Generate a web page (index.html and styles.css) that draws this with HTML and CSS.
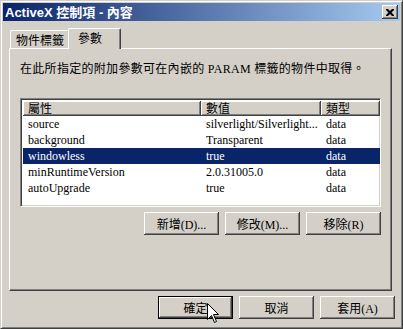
FILE: index.html
```html
<!DOCTYPE html>
<html lang="zh-Hant">
<head>
    <meta charset="UTF-8">
    <meta name="viewport" content="width=device-width, initial-scale=1.0">
    <title>ActiveX 控制項 - 內容</title>
    <link rel="stylesheet" href="styles.css">
</head>
<body>

<div class="window">
    <div class="titlebar">
        <span class="title">ActiveX 控制項 - 內容</span>
        <span class="close">
            <svg width="8" height="7" viewBox="0 0 8 7">
                <path d="M0 0h2l2 2 2-2h2v1l-2.5 2.5L8 6v1H6L4 5 2 7H0V6l2.5-2.5L0 1z" fill="#000"/>
            </svg>
        </span>
    </div>

    <div class="tabs">
        <div class="tab">物件標籤</div>
        <div class="tab active">參數</div>
    </div>

    <div class="panel">
        <p class="hint">在此所指定的附加參數可在內嵌的 PARAM 標籤的物件中取得。</p>

        <div class="list">
            <div class="list-head">
                <div class="head c1">屬性</div>
                <div class="head c2">數值</div>
                <div class="head c3">類型</div>
            </div>
            <div class="row">
                <span class="c1">source</span>
                <span class="c2">silverlight/Silverlight...</span>
                <span class="c3">data</span>
            </div>
            <div class="row">
                <span class="c1">background</span>
                <span class="c2">Transparent</span>
                <span class="c3">data</span>
            </div>
            <div class="row selected">
                <span class="c1">windowless</span>
                <span class="c2">true</span>
                <span class="c3">data</span>
            </div>
            <div class="row">
                <span class="c1">minRuntimeVersion</span>
                <span class="c2">2.0.31005.0</span>
                <span class="c3">data</span>
            </div>
            <div class="row">
                <span class="c1">autoUpgrade</span>
                <span class="c2">true</span>
                <span class="c3">data</span>
            </div>
        </div>

        <div class="actions">
            <button class="btn">新增(D)...</button>
            <button class="btn">修改(M)...</button>
            <button class="btn">移除(R)</button>
        </div>
    </div>

    <div class="footer">
        <button class="btn default">確定</button>
        <button class="btn">取消</button>
        <button class="btn">套用(A)</button>
    </div>

    <!-- 滑鼠游標 -->
    <svg class="cursor" width="13" height="21" viewBox="0 0 13 21">
        <path d="M0.5 0.5V16.5L4.5 12.5L7.5 19.5L9.5 18.5L6.5 11.5H11.5Z" fill="#fff" stroke="#000" stroke-linejoin="miter"/>
    </svg>
</div>

</body>
</html>
```

FILE: styles.css
```css
* {
    box-sizing: border-box;
}
body {
    margin: 0;
    background-color: #d4d0c8;
    font-family: "Liberation Serif", "Noto Sans CJK TC", serif;
    font-size: 12px;
    color: #000;
}
.window {
    position: relative;
    width: 403px;
    height: 329px;
    padding: 2px;
    border: 1px solid;
    border-color: #d4d0c8 #404040 #404040 #d4d0c8;
    box-shadow: inset 1px 1px #fff, inset -1px -1px #808080;
    display: flex;
    flex-direction: column;
}
.titlebar {
    height: 18px;
    padding: 0 2px 0 2px;
    display: flex;
    align-items: center;
    justify-content: space-between;
    background: linear-gradient(to right, #0a246a, #a6caf0);
}
.title {
    color: #fff;
    font-family: "Liberation Sans", "Noto Sans CJK TC", sans-serif;
    font-weight: bold;
    font-size: 13px;
    line-height: 15px;
}
.close {
    width: 16px;
    height: 14px;
    display: flex;
    align-items: center;
    justify-content: center;
    background: #d4d0c8;
    box-shadow: inset -1px -1px #404040, inset 1px 1px #fff, inset -2px -2px #808080;
}
.tabs {
    display: flex;
    align-items: flex-end;
    height: 20px;
    margin-top: 7px;
    padding-left: 7px;
    position: relative;
    z-index: 1;
}
.tab {
    height: 18px;
    width: 60px;
    padding-left: 5px;
    line-height: 17px;
    font-family: "Noto Sans CJK TC", sans-serif;
    border-left: 1px solid #fff;
    border-top: 1px solid #fff;
    border-right: 1px solid #404040;
    border-radius: 2px 2px 0 0;
    box-shadow: inset -1px 0 #808080;
}
.tab.active {
    height: 21px;
    width: 53px;
    margin-left: -2px;
    margin-bottom: -1px;
    padding-left: 9px;
    line-height: 18px;
    background: #d4d0c8;
}
.panel {
    width: 383px;
    height: 243px;
    margin-left: 6px;
    padding: 13px 10px 0 10px;
    border: 1px solid;
    border-color: #fff #404040 #404040 #fff;
    box-shadow: inset -1px -1px #808080;
}
.hint {
    margin: 0;
    height: 14px;
    line-height: 14px;
    font-size: 12px;
    letter-spacing: 0.3px;
}
.list {
    margin-top: 22px;
    width: 361px;
    height: 109px;
    background: #fff;
    border: 1px solid;
    border-color: #808080 #fff #fff #808080;
    box-shadow: inset 1px 1px #404040, inset -1px -1px #d4d0c8;
    padding: 2px 0 0 2px;
}
.list-head {
    display: flex;
    height: 15px;
}
.head {
    height: 15px;
    line-height: 14px;
    padding-left: 5px;
    background: #d4d0c8;
    font-family: "Noto Sans CJK TC", sans-serif;
    box-shadow: inset -1px -1px #404040, inset 1px 1px #fff, inset -2px -2px #808080;
}
.c1 {
    width: 178px;
}
.c2 {
    width: 120px;
}
.c3 {
    width: 59px;
}
.row {
    display: flex;
    height: 16px;
    line-height: 16px;
}
.row span {
    padding-left: 5px;
    white-space: nowrap;
    overflow: hidden;
}
.row.selected {
    width: 357px;
    background: #0a246a;
    color: #fff;
}
.actions {
    display: flex;
    justify-content: flex-end;
    gap: 6px;
    margin-top: 5px;
}
.btn {
    width: 75px;
    height: 23px;
    padding: 0;
    background: #d4d0c8;
    border: none;
    font-family: "Liberation Serif", "Noto Sans CJK TC", serif;
    font-size: 12px;
    color: #000;
    box-shadow: inset -1px -1px #404040, inset 1px 1px #fff, inset -2px -2px #808080, inset 2px 2px #d4d0c8;
}
.btn.default {
    border: 1px solid #000;
    box-shadow: inset -1px -1px #404040, inset 1px 1px #fff, inset -2px -2px #808080;
}
.footer {
    display: flex;
    justify-content: flex-end;
    gap: 6px;
    margin-top: 5px;
    padding-right: 5px;
}
.cursor {
    position: absolute;
    left: 206px;
    top: 302px;
}
```
